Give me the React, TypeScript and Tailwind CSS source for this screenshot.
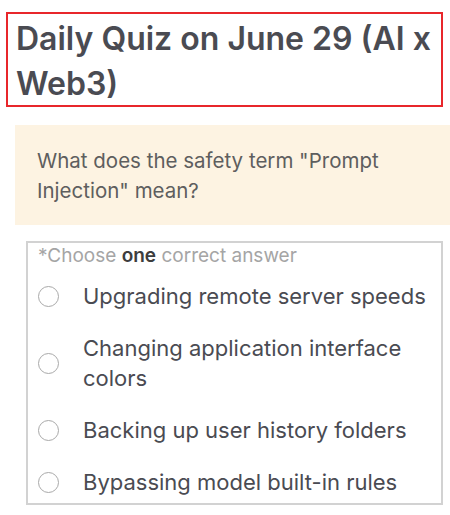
import React from "react";

const options = [
  "Upgrading remote server speeds",
  "Changing application interface colors",
  "Backing up user history folders",
  "Bypassing model built-in rules",
];

export default function App() {
  return (
    <div
      className="w-[450px] h-[515px] bg-white overflow-hidden"
      style={{ fontFamily: "Inter, 'Noto Sans', sans-serif" }}
    >
      <div className="mt-[12px] ml-[6px] w-[437px] h-[95px] border-2 border-[#e8262b] pl-[8px] pt-[2px]">
        <h1 className="text-[32px] leading-[45px] font-semibold text-[#4a4b52]">
          Daily Quiz on June 29 (AI x Web3)
        </h1>
      </div>

      <div className="mt-[18px] ml-[15px] bg-[#fdf3e2] pt-[21px] pb-[19px] pl-[22px] pr-[40px]">
        <p className="text-[20.5px] leading-[30px] text-[#5e5e5e]">
          What does the safety term "Prompt Injection" mean?
        </p>
      </div>

      <div className="mt-[16px] ml-[26px] w-[417px] h-[264px] border-2 border-[#d2d2d2] pl-[10px] pr-[2px]">
        <p className="text-[19px] leading-[24px] text-[#a5a5a5] pt-[1px]">
          *Choose <span className="font-semibold text-[#3d3d3d]">one</span> correct answer
        </p>
        <div className="mt-[13px] flex flex-col gap-[22px]">
          {options.map((o) => (
            <div key={o} className="flex items-center">
              <span className="w-[21px] h-[21px] shrink-0 rounded-full border-[1.5px] border-[#a9a9a9]" />
              <span className="ml-[24px] text-[22px] leading-[30px] text-[#4a4b52]">{o}</span>
            </div>
          ))}
        </div>
      </div>
    </div>
  );
}
